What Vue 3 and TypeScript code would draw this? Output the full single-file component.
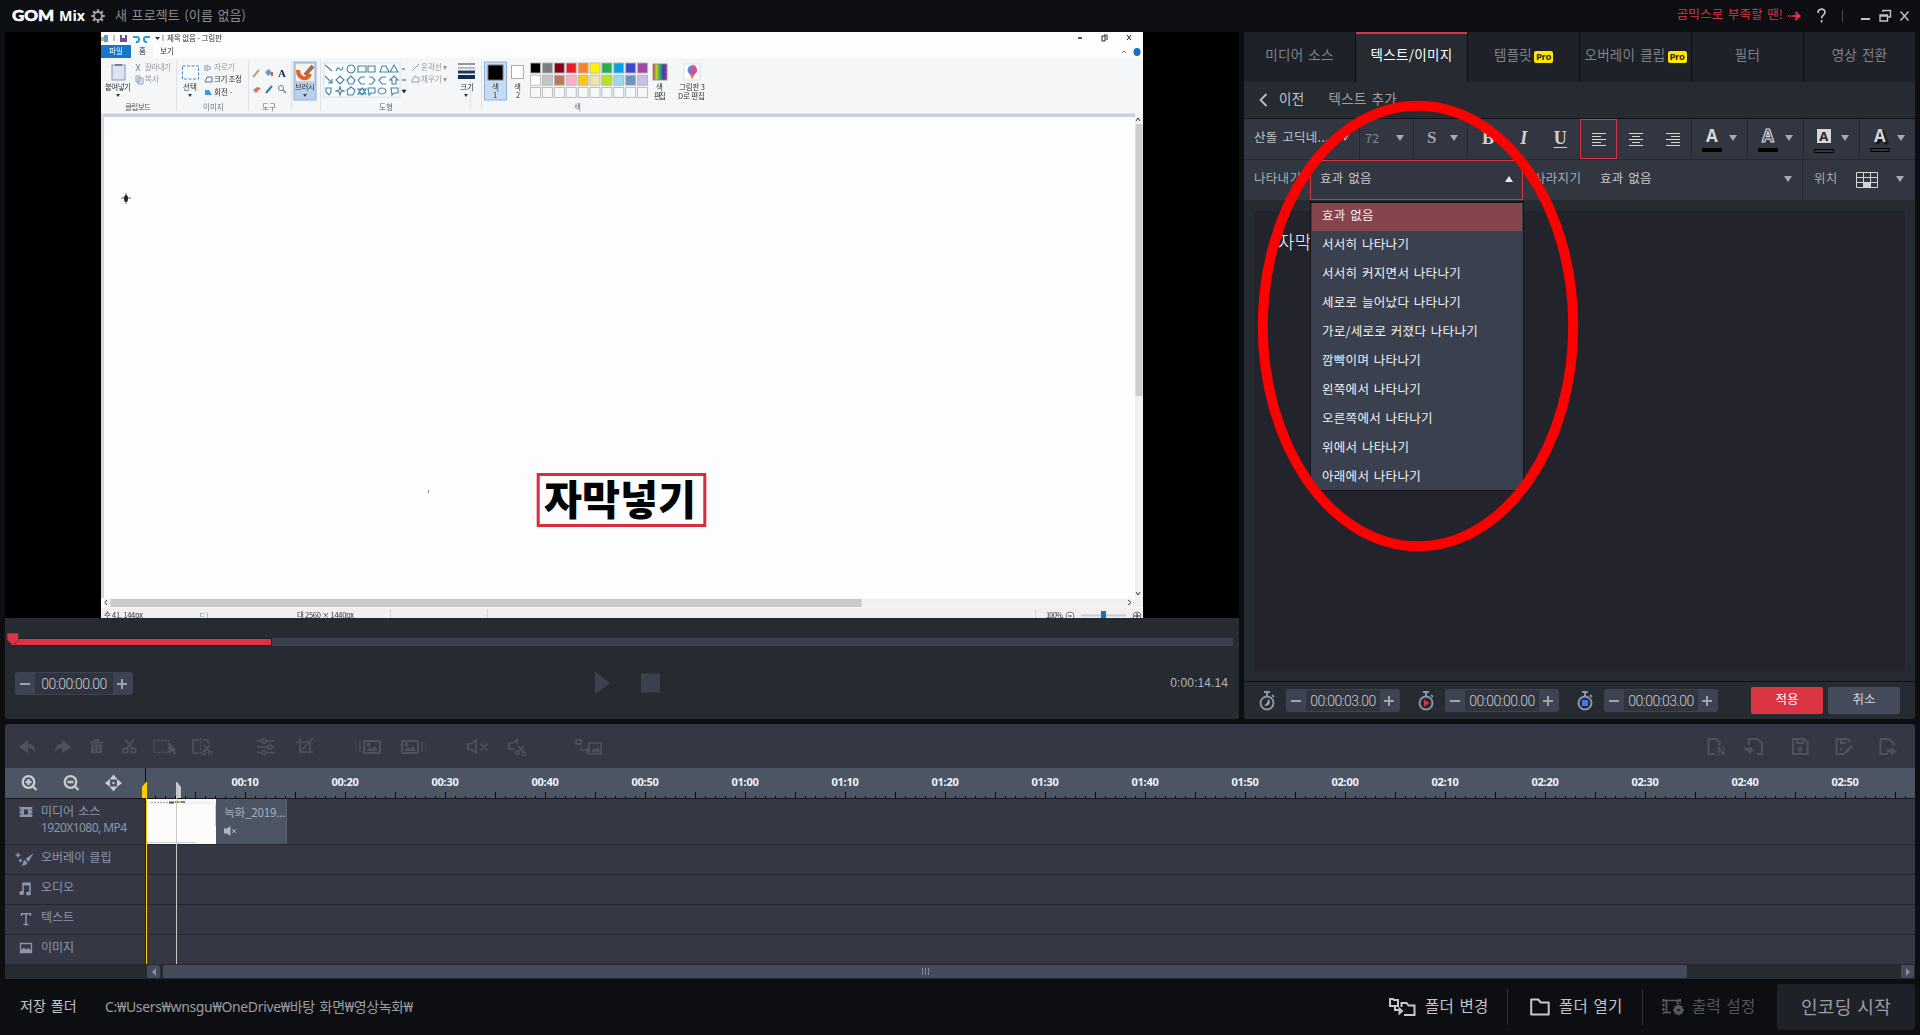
<script setup lang="ts">
interface Tab { label: string; pro?: boolean; active?: boolean }
const tabs: Tab[] = [
  { label: '미디어 소스' },
  { label: '텍스트/이미지', active: true },
  { label: '템플릿', pro: true },
  { label: '오버레이 클립', pro: true },
  { label: '필터' },
  { label: '영상 전환' },
]
const effects: string[] = [
  '효과 없음', '서서히 나타나기', '서서히 커지면서 나타나기', '세로로 늘어났다 나타나기',
  '가로/세로로 커졌다 나타나기', '깜빡이며 나타나기', '왼쪽에서 나타나기',
  '오른쪽에서 나타나기', '위에서 나타나기', '아래에서 나타나기',
]
const timers = [
  { kind: 'duration', value: '00:00:03.00' },
  { kind: 'start', value: '00:00:00.00' },
  { kind: 'end', value: '00:00:03.00' },
]
const marks = Array.from({ length: 17 }, (_, i) => {
  const s = (i + 1) * 10
  return {
    x: 100 * (i + 1) - 1,
    label: `${String(Math.floor(s / 60)).padStart(2, '0')}:${String(s % 60).padStart(2, '0')}`,
  }
})
const ticks = Array.from({ length: 176 }, (_, i) => ({ x: (i + 1) * 10 - 1, tall: (i + 1) % 5 === 0 }))
const palette: string[][] = [
  ['#000', '#7f7f7f', '#88001b', '#ed1c24', '#ff7f27', '#fff200', '#22b14c', '#00a2e8', '#3f48cc', '#a349a4'],
  ['#fff', '#c3c3c3', '#b97a57', '#ffaec9', '#ffc90e', '#efe4b0', '#b5e61d', '#99d9ea', '#7092be', '#c8bfe7'],
  ['#f7f8f9', '#f7f8f9', '#f7f8f9', '#f7f8f9', '#f7f8f9', '#f7f8f9', '#f7f8f9', '#f7f8f9', '#f7f8f9', '#f7f8f9'],
]
const alignRows = {
  left: [[0, 14], [0, 9], [0, 14], [0, 9], [0, 14]],
  center: [[0, 14], [3, 8], [0, 14], [3, 8], [0, 14]],
  right: [[0, 14], [5, 9], [0, 14], [5, 9], [0, 14]],
}
const aligns = ['left', 'center', 'right'] as const
const letterTools = ['fill', 'outline', 'box', 'shadow']
const shapeIcons = [
  'M325 65l7 6', 'M336 71c3-9 4 5 7-4', 'M351 65a4 4 0 1 0 .1 0', 'M358 66h8v6h-8z', 'M368 66h7v6h-7z', 'M380 72l2-6h4l3 6z', 'M390 72l4-7 4 7z',
  'M325 76l7 7m0-4v4h-4', 'M340 76l4 4-4 4-4-4z', 'M347 80l4-4 4 4-2 4h-4z', 'M365 77h-4l-3 3 3 4h4', 'M369 77h3l3 3-3 4h-3', 'M386 77h-4l-3 3 3 4h4', 'M390 80l4-4 4 4h-2v4h-4v-4z',
  'M326 88h5v4l-2 3-3-3z', 'M340 87l1 3 3 1-3 1-1 3-1-3-3-1 3-1z', 'M351 87l4 3-2 5h-5l-1-5z', 'M358 89h8l-4 6zM358 94h8l-4-6z', 'M368 88h7v5h-4l-2 2z', 'M382 88a4 3 0 1 0 .1 0', 'M391 88h7v5h-4l-2 2z',
]
</script>

<template>
  <div class="app">
    <header class="titlebar">
      <svg class="logo" width="76" height="22" viewBox="0 0 76 22">
        <text x="0" y="16" textLength="42" lengthAdjust="spacingAndGlyphs" class="gom">GOM</text>
        <text x="47" y="16" textLength="26" lengthAdjust="spacingAndGlyphs" class="mix">Mix</text>
      </svg>
      <svg class="gear" width="14" height="14" viewBox="-7 -7 14 14">
        <circle r="4" fill="none" stroke="#a3a3a5" stroke-width="1.8" />
        <path d="M0-6.8v2.3M0 6.8V4.5M-6.8 0h2.3M6.8 0H4.5M-4.8-4.8l1.7 1.7M4.8 4.8 3.1 3.1M-4.8 4.8l1.7-1.7M4.8-4.8 3.1-3.1" stroke="#a3a3a5" stroke-width="2.2" />
      </svg>
      <span class="project">새 프로젝트 (이름 없음)</span>
      <span class="spacer"></span>
      <span class="promo">곰믹스로 부족할 땐!</span>
      <svg class="arrow" width="13" height="10" viewBox="0 0 13 10"><path d="M0 5h1.2M2.2 5h1.2M4.400 5H11M7.400 1 11.400 5 7.400 9" fill="none" stroke="#db3442" stroke-width="2.2" /></svg>
      <svg class="win" width="98" height="18" viewBox="0 0 98 18">
        <path d="M4 6c0-5 7-5 7-.8 0 3-3.4 2.8-3.4 6M7.6 13v2.4" fill="none" stroke="#c2c3c5" stroke-width="1.7" />
        <path d="M28.500 3v12" stroke="#45474c" />
        <path d="M47 12h9" stroke="#c2c3c5" stroke-width="2" />
        <path d="M69 5V3.500h7.500v6.500H74M66 8h7.500v6H66z M66 9h7" fill="none" stroke="#c2c3c5" stroke-width="1.4" />
        <path d="M86.500 4.500l8 9M94.500 4.500l-8 9" stroke="#c2c3c5" stroke-width="1.4" />
      </svg>
    </header>

    <main class="upper">
      <section class="player">
        <div class="stage">
          <svg class="video" width="1042" height="586" viewBox="101 32 1042 586">
            <rect x="101" y="32" width="1042" height="586" fill="#fdfdfd" />
            <g class="soft">
              <path d="M101 37h3v4h-3z" fill="#e4a552" /><path d="M104 35l4 0v7h-4z" fill="#57a0cb" /><path d="M114 35v6M163 35v6" stroke="#888" />
              <path d="M120 35h7v7h-7z" fill="#6c5396" /><path d="M122 35h3v3h-3z" fill="#fff" />
              <path d="M133 37h3c4-1 4 5 0 5M150 37h-3c-4-1-4 5 0 5" fill="none" stroke="#269bd8" stroke-width="2" />
              <path d="M155 37h5l-2.500 3z" fill="#333" />
              <text x="167" y="41" textLength="55" class="pt dark">제목 없음 - 그림판</text>
              <path d="M1078 38h4" stroke="#222" stroke-width="1.5" /><path d="M1102 36h3v5h-3zM1104 35h3v5" fill="none" stroke="#222" /><path d="M1127 35l4 5m0-5l-4 5" stroke="#222" />
              <path d="M1122 53l2-2 2 2" fill="none" stroke="#888" /><ellipse cx="1137" cy="52" rx="3.500" ry="4" fill="#1272c0" />
              <rect x="101" y="45" width="30" height="13" fill="#1577cb" />
              <text x="109" y="54" class="pt" fill="#fff">파일</text>
              <rect x="132" y="45" width="21" height="14" fill="#f5f6f7" />
              <text x="139" y="54" class="pt dark">홈</text><text x="160" y="54" class="pt dark">보기</text>
              <rect x="101" y="58" width="1042" height="56" fill="#f4f6f7" />
              <rect x="101" y="113.500" width="1034" height="3.500" fill="#c7d0df" />
              <rect x="101" y="114" width="3" height="484" fill="#d0d8e6" />
              <path d="M176.500 60v51M248.500 60v51M291.500 60v51M320.500 60v51M470.500 60v51" stroke="#dfe2e6" />
              <!-- clipboard and image groups -->
              <rect x="112" y="65" width="13" height="15" fill="#dce4f2" stroke="#8496b7" /><path d="M115 65h7" stroke="#7a7f8a" stroke-width="2" />
              <text x="105" y="90" class="pt dark" textLength="26">붙여넣기</text><path d="M116 94h4l-2 3z" fill="#333" />
              <path d="M136 64l4 7m0-7l-4 7" stroke="#889" /><text x="145" y="70" class="pt" fill="#999" textLength="26">잘라내기</text>
              <path d="M136 76h4v6h-4zM138 78h5v6h-5z" fill="#e8eff8" stroke="#7d93b8" stroke-width=".8" /><text x="145" y="82" class="pt" fill="#999">복사</text>
              <text x="125" y="110" class="pt" fill="#555" textLength="26">클립보드</text>
              <rect x="182.500" y="66" width="16" height="13" fill="#f8fbfe" stroke="#4d86b8" stroke-dasharray="3 1.500" />
              <text x="183" y="90" class="pt dark">선택</text><path d="M188 94h4l-2 3z" fill="#333" />
              <path d="M205 65v6m2-6l4 3-4 3z" fill="none" stroke="#7b9bc0" /><text x="214" y="70" class="pt" fill="#999">자르기</text>
              <path d="M205 82l2-5h5v5z" fill="none" stroke="#3d7cb2" /><text x="214" y="82" class="pt dark" textLength="28">크기 조정</text>
              <path d="M205 90h4l3 5h-7z" fill="#3c9bd5" /><text x="214" y="95" class="pt dark">회전 -</text>
              <text x="203" y="110" class="pt" fill="#777">이미지</text>
              <path d="M253 77l6-7" stroke="#c6a263" stroke-width="2" /><path d="M265 72l4-3 3 4-4 3z" fill="#6d97c6" /><path d="M272 72v4" stroke="#ce6048" stroke-width="2" />
              <text x="278" y="77" class="serifA">A</text>
              <path d="M253 90l4-3 4 1-5 5z" fill="#dd716a" /><path d="M266 93l6-7" stroke="#3276b5" stroke-width="2" /><circle cx="281" cy="88" r="2.500" fill="#fff" stroke="#777" /><path d="M283 90l3 3" stroke="#777" stroke-width="1.500" />
              <text x="262" y="110" class="pt" fill="#666">도구</text>
              <rect x="294" y="62" width="22" height="38" fill="#b9d1ed" stroke="#8fb0d5" /><rect x="296" y="64" width="18" height="17" fill="#f5f2ee" />
              <path d="M298 70c0 9 10 11 12 4" fill="none" stroke="#e1622b" stroke-width="4" /><path d="M305 75l8-9" stroke="#9b7047" stroke-width="4" />
              <text x="295" y="90" class="pt dark" textLength="20">브러시</text><path d="M303 94h4l-2 3z" fill="#345" />
              <rect x="324" y="63" width="76" height="34" fill="#fafcfe" stroke="#dbe0e6" />
              <g fill="none" stroke="#4084a8" stroke-width="1.100"><path v-for="d in shapeIcons" :key="d" :d="d" /></g>
              <path d="M402 69h3M402 80h4M402 90h4l-2 3z" stroke="#555" />
              <path d="M412 71l7-7M412 82h7v-4l-4-2-3 4z" fill="none" stroke="#8c9fb8" /><text x="421" y="70" class="pt" fill="#999">윤곽선 ▾</text><text x="421" y="82" class="pt" fill="#999">채우기 ▾</text>
              <text x="379" y="110" class="pt" fill="#666">도형</text>
              <path d="M458 64h17" stroke="#999" stroke-width="2" /><path d="M458 68h17" stroke="#bbb" stroke-width="2" /><path d="M458 72h17" stroke="#203a63" stroke-width="3" /><path d="M458 77h17" stroke="#132b50" stroke-width="4" />
              <text x="460" y="90" class="pt dark">크기</text><path d="M464 94h4l-2 3z" fill="#333" />
              <!-- colour group -->
              <path d="M481.500 60v51" stroke="#dfe2e6" /><rect x="484.500" y="62" width="22" height="38" fill="#c5dcf3" stroke="#8eb2d8" />
              <rect x="488" y="65" width="15" height="15" fill="#000" stroke="#777" /><text x="492" y="90" class="pt dark">색</text><text x="493" y="98" class="pt dark">1</text>
              <rect x="511.500" y="65.500" width="12" height="13" fill="#fff" stroke="#aaa" /><text x="514" y="90" class="pt dark">색</text><text x="516" y="98" class="pt dark">2</text>
              <g v-for="(row, r) in palette" :key="r"><rect v-for="(c, i) in row" :key="i" :x="530.5 + i * 11.9" :y="63 + r * 12.2" width="10" height="10" :fill="c" stroke="#b4b6b9" stroke-width=".9" /></g>
              <text x="574" y="110" class="pt" fill="#666">색</text>
              <rect x="653" y="64" width="14" height="16" fill="url(#spectrum)" stroke="#888" stroke-width=".8" />
              <text x="656" y="90" class="pt dark">색</text><text x="654" y="99" class="pt dark" textLength="12">편집</text>
              <rect x="684" y="64" width="16" height="16" fill="#fff" stroke="#ddd" /><circle cx="692" cy="70" r="4.500" fill="#4b8ee8" /><path d="M692 65a5 5 0 0 1 3 9l-3 5-2-5z" fill="#d85488" /><path d="M690 75h4l-2 4z" fill="#f08336" />
              <text x="679" y="90" class="pt dark" textLength="26">그림판 3</text><text x="678" y="99" class="pt dark" textLength="27">D로 편집</text>
              <!-- scroll bars and status bar -->
              <rect x="1135" y="114" width="8" height="493" fill="#f1f1f1" /><rect x="1135.500" y="124" width="7" height="272" fill="#cdcdcd" />
              <path d="M1136 121l2-3 2 3M1136 592l2 3 2-3" fill="none" stroke="#333" />
              <rect x="104" y="598.500" width="1031" height="9" fill="#f1f1f1" /><rect x="110.500" y="599" width="751" height="8" fill="#cacaca" />
              <path d="M1128 600l3 2.500-3 2.500M107 600l-2 2.500 2 2.500" fill="none" stroke="#444" />
              <rect x="101" y="608" width="1042" height="10" fill="#f0f0f0" />
              <path d="M390.500 609v9M487.500 609v9M1035.500 609v9" stroke="#d4d4d4" />
              <text x="104" y="618" class="pt dark" textLength="39">수 41, 144px</text><text x="199" y="618" class="pt" fill="#7793b5">ㄷ)</text>
              <text x="297" y="618" class="pt dark" textLength="57">대 2560 × 1440px</text>
              <text x="1046" y="618" class="pt dark" textLength="17">100%</text>
              <circle cx="1070" cy="616" r="4" fill="#fff" stroke="#777" /><path d="M1068 616h4M1134 616h6M1137 613v5" stroke="#333" /><circle cx="1137" cy="616" r="4" fill="none" stroke="#777" />
              <path d="M1081 615.500h45" stroke="#c9c9c9" stroke-width="2" /><rect x="1101" y="611" width="5" height="7" fill="#0e72c9" />
              <path d="M121 198h10M126 193v11" stroke="#666" /><ellipse cx="126" cy="198.500" rx="2" ry="3.500" fill="#222" /><path d="M428.500 490v3" stroke="#888" />
            </g>
            <rect x="538.200" y="474.500" width="166.600" height="51" fill="#fdfdfd" stroke="#d92c3d" stroke-width="3" />
            <text x="544" y="514.500" textLength="152" lengthAdjust="spacingAndGlyphs" class="caption">자막넣기</text>
            <defs><linearGradient id="spectrum"><stop offset="0" stop-color="#d43c3c" /><stop offset=".25" stop-color="#b8cf3a" /><stop offset=".5" stop-color="#2eb05c" /><stop offset=".75" stop-color="#4535cf" /><stop offset="1" stop-color="#b33a85" /></linearGradient></defs>
          </svg>
        </div>
        <div class="seek">
          <div class="seek-done"></div>
          <svg class="seek-thumb" width="12" height="13" viewBox="0 0 12 13"><path d="M0 0h11.500v7L6 12.500 0 7z" fill="#db3442" stroke="#262a31" stroke-width=".6" /></svg>
        </div>
        <div class="controls">
          <div class="spin wide"><i class="minus"></i><span>00:00:00.00</span><i class="plus"></i></div>
          <svg class="transport" width="66" height="22" viewBox="0 0 66 22"><path d="M0 0l15 11L0 22zM46 1.500h19v19H46z" fill="#3b414f" /></svg>
          <span class="total">0:00:14.14</span>
        </div>
      </section>

      <section class="side">
        <nav class="tabs">
          <div v-for="t in tabs" :key="t.label" class="tab" :class="{ active: t.active }">
            {{ t.label }}<b v-if="t.pro" class="pro">Pro</b>
          </div>
        </nav>
        <div class="crumb">
          <svg width="9" height="14" viewBox="0 0 9 14"><path d="M7.500 1 1.500 7l6 6" fill="none" stroke="#c0c2c6" stroke-width="1.800" /></svg>
          <span class="back">이전</span><span>텍스트 추가</span>
        </div>
        <div class="bar">
          <div class="cell font"><span>산돌 고딕네...</span><i class="caret"></i></div>
          <div class="cell size"><span>72</span><i class="caret"></i></div>
          <div class="cell style"><span>S</span><i class="caret"></i></div>
          <div class="cell biu"><b>B</b><b class="it">I</b><b class="un">U</b></div>
          <div class="cell aligns">
            <div v-for="a in aligns" :key="a" class="align" :class="{ on: a === 'left' }">
              <svg width="14" height="13" viewBox="0 0 14 13"><rect v-for="(r, i) in alignRows[a]" :key="i" :x="r[0]" :y="i * 3" :width="r[1]" height="1" fill="#d5d6d8" /></svg>
            </div>
          </div>
          <div v-for="l in letterTools" :key="l" class="cell letter" :class="l">
            <span class="glyph"><b>A</b><em></em></span><i class="caret"></i>
          </div>
        </div>
        <div class="bar second">
          <span class="lbl appear">나타내기</span>
          <div class="combo">
            <span>효과 없음</span><i class="caret up"></i>
            <ul class="menu"><li v-for="(e, i) in effects" :key="e" :class="{ sel: i === 0 }">{{ e }}</li></ul>
          </div>
          <span class="lbl vanish">사라지기</span>
          <div class="combo2"><span>효과 없음</span><i class="caret"></i></div>
          <div class="place"><span>위치</span>
            <svg width="22" height="16" viewBox="0 0 22 16"><path d="M.500.500h21v15H.500zM.500 5.500h21M.500 10.500h21M7.500.500v15M14.500.500v15" fill="none" stroke="#d3d5d8" /><path d="M8 11h6v4H8z" fill="#d3d5d8" /></svg>
            <i class="caret"></i>
          </div>
        </div>
        <div class="editor"><div class="paper">자막</div></div>
        <div class="apply-row">
          <template v-for="t in timers" :key="t.kind">
            <svg class="watch" width="16" height="20" viewBox="0 0 16 20">
              <path d="M5 1h6M8 1v4" stroke="#8a95aa" stroke-width="2" /><path d="M13 4l2 2" stroke="#8a95aa" stroke-width="1.800" />
              <circle cx="8" cy="12" r="6.500" fill="#262a31" stroke="#8a95aa" stroke-width="2" />
              <path v-if="t.kind === 'duration'" d="M9 8c4 3 1 8-4 6.500C8 13 9 11 9 8z" fill="#a3a9b4" />
              <path v-else-if="t.kind === 'start'" d="M6 8.500l5.500 3.500L6 15.500z" fill="#db3442" />
              <path v-else d="M5 9h6v6H5z" fill="#3c77fb" />
            </svg>
            <div class="spin"><i class="minus"></i><span>{{ t.value }}</span><i class="plus"></i></div>
          </template>
          <button class="btn ok">적용</button><button class="btn">취소</button>
        </div>
      </section>
    </main>

    <section class="timeline">
      <svg class="tools" width="1910" height="44" viewBox="5 724 1910 44" fill="none" stroke="#4e525f" stroke-width="2">
        <path d="M19 747l9-7v4c5 0 7 3 7 8-2-3-4-4-7-4v5zM71 747l-9-7v4c-5 0-7 3-7 8 2-3 4-4 7-4v5z" fill="#4e525f" stroke="none" />
        <path d="M90 742.500h13M94 740h5" /><path d="M91 744.500h11v8.500H91z" fill="#4e525f" stroke="none" /><path d="M94.500 746v6M98.500 746v6" stroke="#353843" stroke-width="1" />
        <path d="M125.500 739.500l7 9.500M133.500 739.500l-7 9.500" stroke-width="1.800" /><circle cx="125.500" cy="750.500" r="2.300" stroke-width="1.600" /><circle cx="133.500" cy="750.500" r="2.300" stroke-width="1.600" />
        <path d="M154 740.500h14.500v12H154z" stroke-dasharray="2 1.500" stroke-width="1.500" /><path d="M169 742v12l3-3 2 4 2-1-2-3h3z" fill="#4e525f" stroke="none" />
        <path d="M199 740h-6v13h6M203 740h5v4" stroke-width="1.700" /><path d="M200.500 738v18" stroke-dasharray="2 1.500" stroke-width="1.500" /><path d="M204 745l6 7M210 745l-6 7" stroke-width="1.500" /><circle cx="204" cy="753" r="1.700" stroke-width="1.300" /><circle cx="210" cy="753" r="1.700" stroke-width="1.300" />
        <path d="M257 741h18M257 747h18M257 752.500h18" stroke-width="1.600" /><g fill="#353843" stroke-width="1.600"><circle cx="264" cy="741" r="2" /><circle cx="270" cy="747" r="2" /><circle cx="264" cy="752.500" r="2" /></g>
        <path d="M300 738v14h13M296 742h14v12M300 752l13-14" stroke-width="1.700" />
        <rect x="364" y="741" width="16" height="12" rx="1" /><path d="M366 751l4-4 2 2 3-3 3 5z" fill="#4e525f" stroke="none" /><circle cx="368.500" cy="744.500" r="1" /><path d="M356 742v10" stroke-width="1" opacity=".6" /><path d="M360 742v10" stroke-width="1.300" />
        <rect x="402" y="741" width="16" height="12" rx="1" /><path d="M404 751l4-4 2 2 3-3 3 5z" fill="#4e525f" stroke="none" /><circle cx="406.500" cy="744.500" r="1" /><path d="M426 742v10" stroke-width="1" opacity=".6" /><path d="M422 742v10" stroke-width="1.300" />
        <path d="M468 743.500h4l4-3.500v13l-4-3.500h-4zM480.500 743.500l7 7M487.500 743.500l-7 7" stroke-width="1.700" />
        <path d="M509 743h4l4-3.500v5M509 743v6h4l2 2" stroke-width="1.700" /><path d="M518 746l6 6M524 746l-6 6" stroke-width="1.500" /><circle cx="517.500" cy="753" r="1.700" stroke-width="1.300" /><circle cx="524" cy="754" r="1.700" stroke-width="1.300" />
        <path d="M576 740h5v4h-5zM589 743h12v11h-12zM581 748v2h5" stroke-width="1.700" /><path d="M586 747l4 3.500-4 3.500zM591 752l3-4 2 2 2-3 3 6z" fill="#4e525f" stroke="none" />
        <path d="M1715 754h-6.500v-15h8l3 3v4" /><text x="1717" y="755" class="tn">N</text>
        <path d="M1749 745v-6h8l5 4v11h-5" /><path d="M1745 745c0 3 2 3 4 3v-2l5 4.500-5 4v-3c-4 0-5-2-4-6.500z" fill="#4e525f" stroke="none" />
        <path d="M1793 739h11l3.500 3v12H1793zM1797 739v4h6v-4" /><circle cx="1800" cy="749" r="1.500" />
        <path d="M1844 754h-7.500v-15h11l3 3M1841 739v4h5M1840 749h2" /><path d="M1844 755l1-4 6-6 2 2-6 6z" fill="#4e525f" stroke="none" />
        <path d="M1888 754h-7.500v-15h8l5 4v3" /><path d="M1885 746c0 3 2 4 6 3.500v-2l6 4-6 4v-3c-4 0-6-2-6-6.500z" fill="#4e525f" stroke="none" />
      </svg>
      <div class="ruler">
        <svg class="zoomers" width="140" height="30" viewBox="5 768 140 30" fill="none" stroke="#c9cbce" stroke-width="2.300">
          <circle cx="28.500" cy="782" r="5.800" /><path d="M32.500 786l4 4M25.500 782h6M28.500 779v6" /><circle cx="70.500" cy="782" r="5.800" /><path d="M74.500 786l4 4M67.500 782h6" />
          <path d="M113.500 774.500l4 5h-8zM113.500 791.500l4-5h-8zM105 783l5-4v8zM122 783l-5-4v8zM112.500 782h2v2h-2z" fill="#c9cbce" stroke="none" />
        </svg>
        <div class="scale">
          <i v-for="t in ticks" :key="t.x" class="tick" :class="{ tall: t.tall }" :style="{ left: t.x + 'px' }"></i>
          <b v-for="m in marks" :key="m.x" :style="{ left: m.x + 'px' }">{{ m.label }}</b>
        </div>
      </div>
      <div class="track media">
        <div class="head"><svg width="14" height="12" viewBox="0 0 14 12"><path d="M1 1h12v10H1z" fill="#8d95a9" /><path d="M5 3.500h4v5H5z" fill="#353843" /><path d="M2 3v1.500M2 7v1.500M12 3v1.500M12 7v1.500" stroke="#353843" /><path d="M0 0v12M14 0v12" stroke="#8d95a9" stroke-dasharray="1.500 1.500" /></svg>
          <div>미디어 소스<br /><span class="fmt">1920X1080, MP4</span></div></div>
        <div class="lane">
          <div class="clip">
            <svg width="69" height="45" viewBox="0 0 69 45"><path fill="#fdfcfd" d="M0 0h69v45H0z" /><path d="M0 2.500h69v3H0z" fill="#f0f1f5" /><path d="M4 3.500h18" stroke="#a3adba" stroke-dasharray="2 1" /><path d="M22 3.500h5" stroke="#35577c" stroke-width="2" /><path d="M28 3h3" stroke="#d8503c" stroke-width="2" /><path d="M31 3h3" stroke="#d7bd42" stroke-width="2" /><path d="M34 3h4" stroke="#3e98a9" stroke-width="2" /><path d="M0 43.500h50" stroke="#cfcfcf" /><path d="M68.500 6v21" stroke="#ccc" /></svg>
            <div class="clip-info">녹화_2019...<svg width="13" height="10" viewBox="0 0 13 10"><path d="M0 2.500h3L6.500 0v10L3 7.500H0z" fill="#b1b6be" /><path d="M8 3l4 4M12 3L8 7" stroke="#b1b6be" /></svg></div>
          </div>
        </div>
      </div>
      <div class="track"><div class="head"><svg class="brush" width="19" height="14" viewBox="0 0 19 14"><path d="M3 0l1 2.200L6 3 4 4 3 6 2 4 0 3l2-.8zM5.500 6l.8 1.700L8 8.500l-1.700.8-.8 1.700-.8-1.700L3 8.500l1.700-.8zM18.500 1l-5 9-3-3zM9.500 8l3 3c-1 2-3 2.500-6 2.500 2-1 1-4 3-5.500z" fill="#8d95a9" /></svg><div>오버레이 클립</div></div><div class="lane"></div></div>
      <div class="track"><div class="head"><svg width="14" height="14" viewBox="0 0 14 14"><path d="M4 11V1.500h7V10" fill="none" stroke="#8d95a9" stroke-width="1.600" /><path d="M4 2h7" stroke="#8d95a9" stroke-width="3" /><ellipse cx="2.700" cy="11" rx="2.500" ry="2" fill="#8d95a9" /><ellipse cx="9.500" cy="11.500" rx="2.500" ry="2" fill="#8d95a9" /></svg><div>오디오</div></div><div class="lane"></div></div>
      <div class="track"><div class="head"><svg width="14" height="14" viewBox="0 0 14 14"><path d="M2.500 4V1.800h9V4M7 2v10.500M4.500 12.500h5" fill="none" stroke="#8d95a9" stroke-width="1.500" /></svg><div>텍스트</div></div><div class="lane"></div></div>
      <div class="track"><div class="head"><svg width="14" height="12" viewBox="0 0 14 12"><path d="M1.500 1.500h11v9h-11z" fill="none" stroke="#8d95a9" stroke-width="1.300" /><path d="M2 10V8l3-2.500 2 2 3-1.500 2 2.500V10z" fill="#8d95a9" /></svg><div>이미지</div></div><div class="lane"></div></div>
      <div class="hscroll">
        <div class="sb left"></div><div class="thumb"><i></i><i></i><i></i></div><div class="sb right"></div>
      </div>
      <div class="playhead"></div><div class="startline"></div>
      <svg class="flags" width="42" height="17" viewBox="0 0 42 17"><path d="M0 16V5l4-5h1v16z" fill="#fc0" /><path d="M34 16V0h1l4 5v11z" fill="#c6c8ca" /></svg>
    </section>

    <footer class="footer">
      <span class="save">저장 폴더</span><span class="path">C:₩Users₩wnsgu₩OneDrive₩바탕 화면₩영상녹화₩</span>
      <span class="spacer"></span>
      <div class="act change"><svg width="27" height="20" viewBox="0 0 27 20" fill="none" stroke="#c6c8cb" stroke-width="2"><path d="M1 2h3l1 1h4v6H1zM12.500 10V6h5l2 2.500h6V18H15" /><path d="M6 10v3h5" /><path d="M9.500 9.500l5 4.500-5 4.500z" fill="#c6c8cb" stroke="none" /></svg><span>폴더 변경</span></div>
      <div class="act open"><svg width="20" height="18" viewBox="0 0 20 18"><path d="M1.200 1.500h7l2.500 3h8V16.500H1.200z" fill="none" stroke="#c6c8cb" stroke-width="2" stroke-linejoin="round" /></svg><span>폴더 열기</span></div>
      <div class="act output"><svg width="23" height="18" viewBox="0 0 23 18" fill="none" stroke="#5a5b60"><path d="M4.500 1.500v13M15.500 1.500v5M2 2.500h16M2 14.500h7" stroke-width="1.700" /><path d="M1.500 1v15M18 1v5" stroke-width="2" stroke-dasharray="3 1.500" /><circle cx="16.500" cy="12" r="3.500" stroke-width="2.400" /><path d="M16.500 6.500v11M11 12h11M12.700 8.200l7.600 7.600M20.300 8.200l-7.600 7.600" stroke-width="1.400" /><circle cx="16.500" cy="12" r="1.200" fill="#0d0e12" stroke="none" /></svg><span>출력 설정</span></div>
      <div class="encode">인코딩 시작</div>
    </footer>

    <svg class="highlight" width="322" height="452" viewBox="0 0 322 452"><ellipse cx="161" cy="226" rx="155.200" ry="220.300" fill="none" stroke="#f00" stroke-width="10" /></svg>
  </div>
</template>

<style>
body { background: #0d0e12; overflow: hidden; }
</style>

<style scoped>
* { box-sizing: border-box; }
.app { position: relative; width: 1920px; height: 1035px; background: #0d0e12; display: flex; flex-direction: column; font-family: "Noto Sans CJK KR", "Noto Sans", sans-serif; color: #c3c5c9; font-size: 12.500px; letter-spacing: .3px; word-spacing: 1.500px; line-height: 1; white-space: nowrap; overflow: hidden; }
svg { display: block; flex: none; letter-spacing: 0; word-spacing: 0; }
.spacer { flex: 1; }
.titlebar { height: 32px; display: flex; align-items: center; padding: 0 8px 2px 12px; flex: none; }
.gom { font: 900 14.500px "Lato", sans-serif; fill: #fff; stroke: #fff; stroke-width: .5px; }
.mix { font: 700 14.500px "Open Sans", sans-serif; fill: #fff; }
.logo { margin-top: 2px; }
.gear { margin-left: 3px; margin-top: 1px; }
.project { margin-left: 10px; margin-top: -1px; font-size: 13px; letter-spacing: .1px; color: #8c8e94; }
.promo { color: #db3442; margin-top: -1px; letter-spacing: .15px; }
.arrow { margin-left: 5px; margin-top: 2px; }
.win { margin-left: 13px; margin-top: 1px; }
.upper { display: flex; gap: 5px; height: 687px; padding-left: 5px; flex: none; }
.player { width: 1234px; height: 687px; background: #262a31; border-radius: 0 0 3px 3px; display: flex; flex-direction: column; }
.stage { height: 586px; background: #000; padding-left: 96px; flex: none; }
.soft { filter: blur(.5px); }
.pt { font: 7.500px "Noto Sans CJK KR", sans-serif; }
.dark { fill: #333; }
.serifA { font: bold 11px "Liberation Serif", serif; fill: #1b2c45; }
.caption { font: 900 41px "Noto Sans CJK KR", sans-serif; fill: #050505; }
.seek { position: relative; height: 8px; margin: 20px 6px 0 6px; background: #3a404d; flex: none; }
.seek-done { height: 8px; width: 261px; background: #db3442; border: solid #20232a; border-width: 1px 1px 1px 0; }
.seek-thumb { position: absolute; left: -4px; top: -5px; }
.controls { display: flex; align-items: center; height: 24px; margin: 25px 11px 0 10px; }
.spin { width: 114px; height: 23px; border-radius: 3px; background: #3d4352; display: flex; align-items: center; padding: 1px; flex: none; }
.spin span { flex: 1; height: 21px; background: #30343e; text-align: center; font: 300 14px/22px Roboto, sans-serif; letter-spacing: -.55px; color: #c9ccd1; }
.spin i { position: relative; width: 19px; height: 21px; flex: none; }
.spin i::before, .plus::after { content: ""; position: absolute; left: 4px; top: 10px; width: 10px; height: 2px; background: #9ea3ad; }
.plus::after { transform: rotate(90deg); }
.wide { width: 118px; }
.transport { margin-left: 462px; }
.total { margin-left: auto; font: 12px "Liberation Sans", sans-serif; letter-spacing: .1px; color: #b4b6bb; }
.side { width: 671px; height: 687px; background: #262a31; border-radius: 0 0 3px 3px; display: flex; flex-direction: column; }
.tabs { display: flex; gap: 1px; height: 50px; background: #0d0e12; flex: none; }
.tab { flex: 1; height: 50px; display: flex; align-items: center; justify-content: center; font-size: 13.500px; background: #1e2128; color: #7f838b; padding-bottom: 6px; border-top: 2px solid #1e2128; }
.tab.active { background: #262a31; border-top: 2px solid #db3442; color: #fff; }
.pro { font: 700 9.500px/12px "Open Sans", sans-serif; letter-spacing: -.3px; background: #ffe800; color: #2a2a10; width: 19px; height: 12px; border-radius: 2px; text-align: center; margin-left: 2px; margin-top: 3px; }
.crumb { height: 36px; display: flex; align-items: center; padding-left: 15px; font-size: 13.500px; color: #9ea1a8; flex: none; }
.crumb span { margin-top: -3px; }
.crumb .back { margin: -3px 24px 0 11px; color: #c3c5c9; }
.bar { height: 41px; display: flex; background: #313641; border-top: 1px solid #111318; flex: none; }
.bar.second { border-top: 1px solid #262a31; align-items: center; }
.caret { border: solid transparent; border-width: 6px 4.500px 0; border-top-color: #a7a9b0; width: 0; height: 0; flex: none; }
.caret.up { border-width: 0 4.500px 6px; border-bottom-color: #e8e8ea; }
.cell { height: 40px; display: flex; align-items: center; justify-content: space-between; border-right: 1px solid #262a31; flex: none; padding-bottom: 2px; }
.font { width: 116px; padding: 0 10px 2px 10px; }
.font span { margin-top: -1px; }
.size { width: 54px; padding: 0 9px 2px 5px; color: #838790; }
.style { width: 54px; padding: 0 9px 2px 13px; font: bold 17px "Liberation Serif", serif; color: #a3a6ac; }
.biu { width: 112px; padding: 0 12px 2px 14px; font: bold 18px "Liberation Serif", serif; color: #d2d3d6; }
.it { font-style: italic; }
.un { text-decoration: underline; text-underline-offset: 3px; }
.aligns { width: 112px; justify-content: flex-start; padding: 0; }
.align { width: 37px; height: 40px; display: flex; align-items: center; justify-content: center; flex: none; }
.align.on { border: 1px solid #db3442; }
.letter { width: 56px; padding: 0 10px 2px 10px; }
.letter:last-child { border-right: 0; width: 55px; }
.glyph { width: 20px; height: 22px; display: flex; flex-direction: column; align-items: center; margin-bottom: -6px; }
.glyph b { font: 700 17px/17px "Open Sans", sans-serif; color: #d5d6d8; height: 18px; margin-top: -3px; }
.glyph em { width: 20px; height: 4px; background: #000; margin-top: 4px; flex: none; }
.outline b { color: #313641; -webkit-text-stroke: 1.200px #d5d6d8; }
.box b { font-size: 13px; line-height: 14px; height: 14px; width: 14px; text-align: center; background: #d5d6d8; color: #23262e; margin: -1px 0 2px; }
.box em, .shadow em { background: #313641; border: 1px solid #000; }
.shadow b { text-shadow: 2px 2px 2px #000; }
.second span { margin-top: -3px; }
.lbl { flex: none; }
.appear { width: 66px; padding-left: 10px; color: #a9acb3; }
.combo { position: relative; width: 213px; height: 40px; border: 1px solid #db3442; display: flex; align-items: center; justify-content: space-between; padding: 0 9px; color: #c9cbcf; flex: none; }
.menu { position: absolute; left: -1px; top: 40px; z-index: 2; width: 214px; margin: 0; padding: 0 1px; list-style: none; background: #3a404d; border: 1px solid #14161b; border-top-width: 2px; height: 290px; color: #f0f1f3; overflow: hidden; }
.menu li { height: 29px; line-height: 24px; padding-left: 10px; }
.menu .sel { background: #86454c; height: 28px; margin-bottom: 1px; }
.vanish { padding-left: 11px; width: 77px; color: #a9acb3; }
.combo2 { display: flex; align-items: center; justify-content: space-between; width: 203px; height: 40px; padding-right: 10px; border-right: 1px solid #262a31; color: #c9cbcf; flex: none; }
.place { display: flex; align-items: center; padding-left: 11px; color: #a9acb3; }
.place svg { margin: 0 18px 0 18px; }
.place .caret, .combo2 .caret, .combo .caret { margin-top: -2px; }
.editor { padding: 11px 10px 10px; height: 481px; flex: none; }
.paper { height: 460px; background: #23232c; color: #fff; font-size: 18px; font-weight: 300; padding: 21px 24px; }
.apply-row { border-top: 1px solid #101217; height: 38px; display: flex; align-items: center; padding-left: 15px; flex: none; }
.watch { margin-right: 11px; }
.spin + .watch { margin-left: 18px; }
.btn { width: 72px; height: 27px; margin-left: 5px; border: 0; padding: 0 0 2px; border-radius: 2px; background: #454b5a; color: #d2d4d8; font: 12.500px "Noto Sans CJK KR", sans-serif; line-height: 1; flex: none; }
.btn.ok { background: #db3442; color: #fff; margin-left: 33px; }
.timeline { position: relative; margin: 5px 5px 0; height: 255px; background: #353844; display: flex; flex-direction: column; flex: none; border-radius: 3px 3px 0 0; }
.tn { font: 700 10px "Open Sans", sans-serif; fill: #4e525f; stroke: none; }
.ruler { height: 31px; background: #4b5564; border-bottom: 1px solid #15171c; display: flex; flex: none; }
.scale { position: relative; flex: 1; height: 30px; border-left: 1px solid #0d0e12; }
.tick { position: absolute; bottom: 0; width: 1px; height: 2px; background: #08090b; }
.tall { height: 6px; }
.scale b { position: absolute; top: 6px; width: 40px; margin-left: -20px; text-align: center; font: 700 11px/15px "Noto Sans", sans-serif; letter-spacing: -.3px; color: #f4f5f6; }
.track { height: 30px; display: flex; border-bottom: 1px solid #26282f; flex: none; color: #8d95a9; font-size: 12px; letter-spacing: 0; }
.media { height: 46px; }
.head { width: 141px; border-right: 1px solid #22242b; padding: 6px 0 0 14px; display: flex; gap: 8px; height: 100%; }
.head svg { margin-top: 1px; }
.media .head { line-height: 16px; padding-top: 4px; }
.media .head svg { margin-top: 3px; }
.fmt { font: 12px/16px "Noto Sans", sans-serif; letter-spacing: -.55px; word-spacing: 0; }
.head .brush { margin-left: -4px; margin-right: -1px; }
.lane { flex: 1; }
.clip { display: flex; width: 140px; height: 45px; margin-left: 1px; background: #4b5564; border-right: 1px solid #5b6474; overflow: hidden; }
.clip-info { padding: 7px 0 0 8px; color: #a9aeb8; font-size: 11.700px; letter-spacing: -.25px; }
.clip-info svg { margin-top: 8px; }
.hscroll { height: 14px; background: #262a31; display: flex; align-items: center; padding: 0 1px 1px 142px; flex: none; }
.sb { width: 13px; height: 13px; border-radius: 2px; background: #454b5a; display: flex; align-items: center; justify-content: center; }
.sb::before { content: ""; border: solid transparent; border-width: 4px 4px 4px 0; border-right-color: #8990a0; }
.sb.right::before { border-width: 4px 0 4px 4px; border-left-color: #8990a0; }
.right { margin-left: auto; }
.thumb { width: 1524px; height: 13px; margin-left: 3px; border-radius: 2px; background: #454b5a; display: flex; align-items: center; justify-content: center; gap: 2px; }
.thumb i { width: 1px; height: 7px; background: #838a99; }
.startline { position: absolute; left: 141px; top: 74px; width: 1px; height: 166px; background: #fc0; }
.playhead { position: absolute; left: 171px; top: 74px; width: 1px; height: 166px; background: #c6c8ca; }
.flags { position: absolute; left: 137px; top: 58px; }
.footer { height: 56px; display: flex; align-items: center; padding-left: 20px; flex: none; }
.save { font-size: 14px; width: 85px; margin-top: -4px; letter-spacing: .1px; }
.path { font: 14px "Noto Sans", "Noto Sans CJK KR", sans-serif; color: #9b9da3; letter-spacing: -.35px; margin-top: -3px; }
.act { display: flex; align-items: center; height: 36px; font-size: 15.500px; color: #c3c5c9; border-right: 1px solid #303238; flex: none; }
.act span { margin-top: -3px; }
.change { width: 119px; gap: 9px; }
.open { width: 135px; padding-left: 22px; gap: 9px; }
.output { width: 134px; padding-left: 19px; gap: 7px; color: #55575d; border: 0; }
.encode { width: 138px; height: 46px; margin-right: 5px; padding-bottom: 3px; border-radius: 3px; background: #1e2128; color: #9b9da4; font-size: 18px; display: flex; align-items: center; justify-content: center; flex: none; }
.highlight { position: absolute; left: 1256.500px; top: 100px; z-index: 5; pointer-events: none; }
</style>
